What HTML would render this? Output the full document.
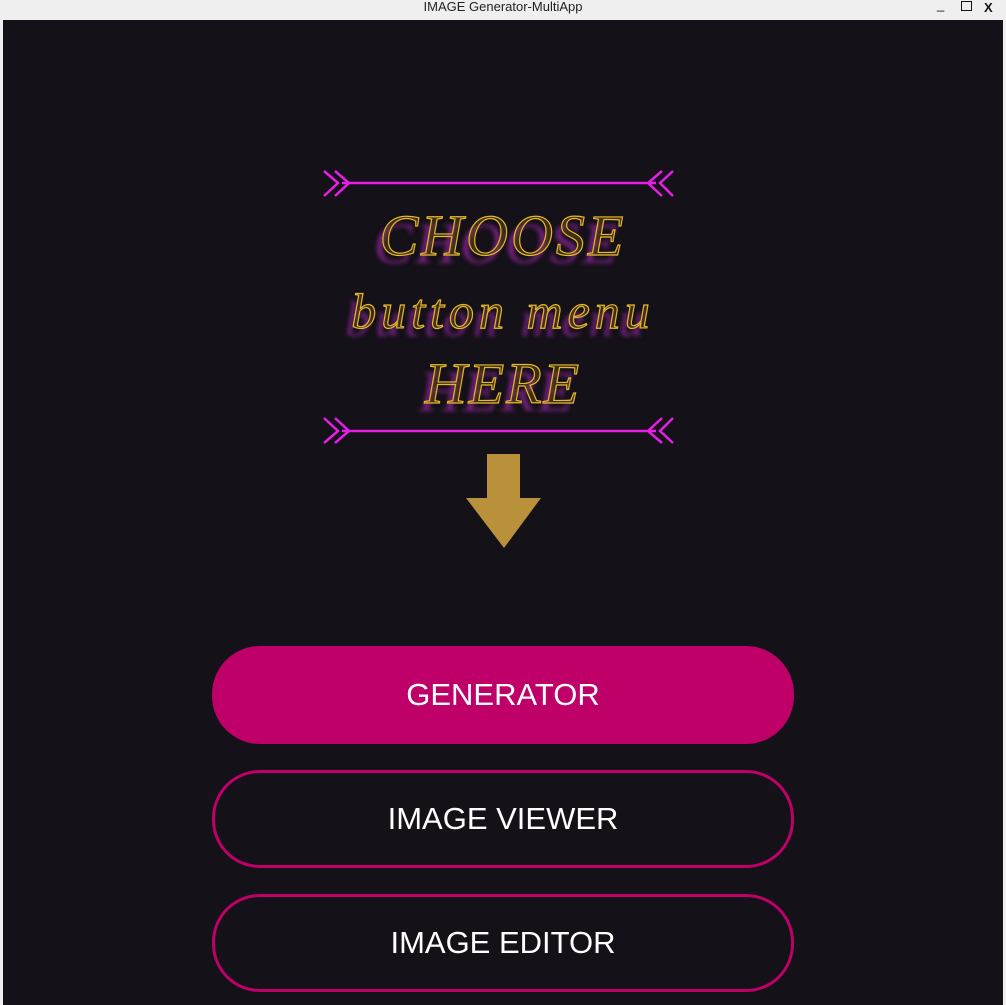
<!DOCTYPE html>
<html><head><style>
body{margin:0;width:1006px;height:1005px;background:#efefef;position:relative;overflow:hidden;font-family:"Liberation Sans",sans-serif}
.title{position:absolute;top:0;left:0;width:1006px;height:20px;text-align:center;font-size:13px;line-height:14px;color:#222}
.ctl{position:absolute;top:0;font-size:13px;color:#111}
.main{position:absolute;left:3px;top:20px;width:1000px;height:985px;background:#141118}
.btn{position:absolute;left:212px;width:582px;box-sizing:border-box;border-radius:48px;color:#fff;font-size:31px;text-align:center}
.t{position:absolute;left:0;width:1006px;text-align:center;font-family:"Liberation Serif",serif;font-style:italic;color:rgba(120,90,20,.4);-webkit-text-stroke:1.2px #e7b92a;text-shadow:-6px 8px 4px rgba(150,40,160,.75)}
</style></head><body>
<div class="title">IMAGE Generator-MultiApp</div>
<div class="ctl" style="left:937px;top:-3px">_</div>
<div class="ctl" style="left:961px;top:1px;width:9px;height:8px;border:1.5px solid #111"></div>
<div class="ctl" style="left:984px;top:0px;font-weight:bold">X</div>
<div class="main"></div>
<svg style="position:absolute;left:0;top:0" width="1006" height="1005">
<g stroke="#e61ee6" stroke-width="2.5" fill="none">
<path d="M342 183H656M324 171L338 183L324 196M335 171L349 183L335 196M673 171L660 183L673 196M662 171L648 183L662 196"/>
<path d="M342 431H656M324 418L338 431L324 443M335 418L349 431L335 443M673 418L660 431L673 443M662 418L648 431L662 443"/>
</g>
<path d="M487 454H520V498H541L504 548L466 498H487Z" fill="#b8913a"/>
</svg>
<div class="t" style="top:202px;font-size:58px;letter-spacing:3px">CHOOSE</div>
<div class="t" style="top:282px;font-size:50px;letter-spacing:5px">button menu</div>
<div class="t" style="top:350px;font-size:58px;letter-spacing:2px">HERE</div>
<div class="btn" style="top:646px;height:98px;background:#bf0069;line-height:98px">GENERATOR</div>
<div class="btn" style="top:770px;height:98px;border:3px solid #bf0069;line-height:92px">IMAGE VIEWER</div>
<div class="btn" style="top:894px;height:98px;border:3px solid #bf0069;line-height:92px">IMAGE EDITOR</div>
</body></html>
